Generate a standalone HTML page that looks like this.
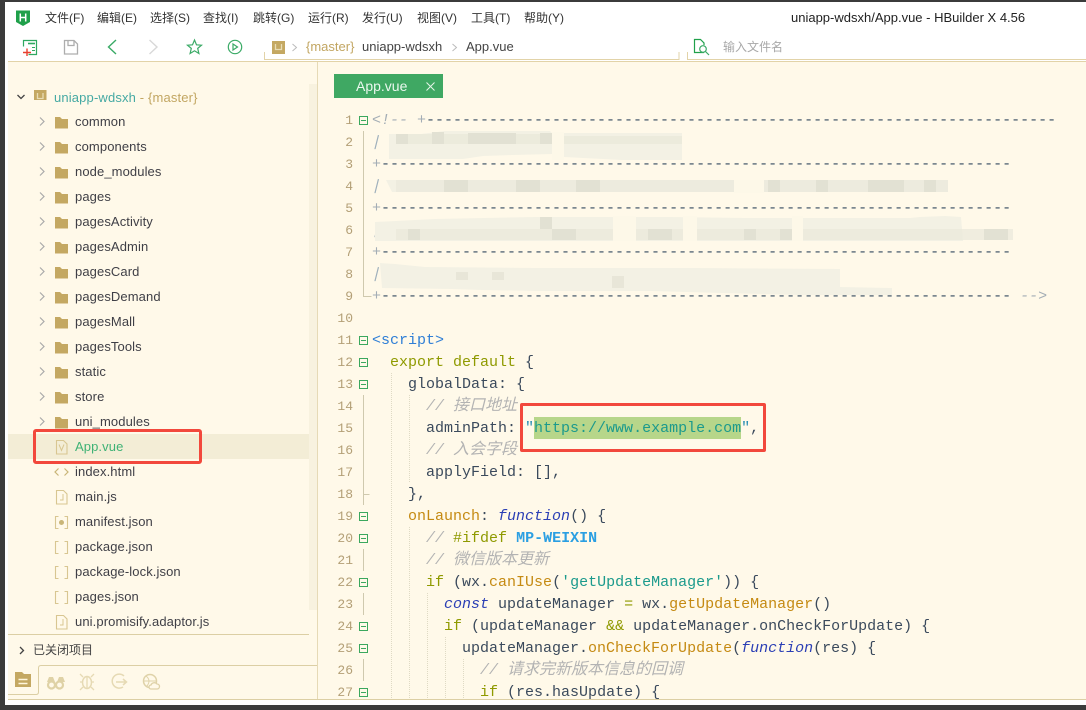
<!DOCTYPE html>
<html><head><meta charset="utf-8"><style>
html,body{margin:0;padding:0;width:1086px;height:710px;overflow:hidden;background:#3b3b3b}
*{box-sizing:border-box}
.a{position:absolute}
#app{position:absolute;left:5px;top:2px;width:1081px;height:703px;background:#fff;overflow:hidden}
#root{position:absolute;left:0;top:0;width:1086px;height:710px;font-family:"Liberation Sans","Noto Sans CJK SC",sans-serif;overflow:hidden}
.m{position:absolute;top:10px;font-size:12px;line-height:16px;color:#333;white-space:nowrap}
.r{position:absolute;left:75px;font-size:13px;line-height:18px;color:#3f3f46;white-space:nowrap;letter-spacing:.1px}
pre{margin:0;font-family:"Liberation Mono","Noto Sans CJK SC",monospace;font-size:15px;line-height:22px;position:absolute}
pre .z{font-size:16px;line-height:0;letter-spacing:0}
.c{color:#b3b3b3;font-style:italic}.k{color:#8f9a00}.p{color:#c58a12}.f{color:#2b3fb5;font-style:italic}
.s{color:#1b9a8c}.t{color:#2f7fd6}.d{color:#3a4f64}.q{color:#a3adb5;font-style:italic}
.b{display:inline-block;transform:skewX(-14deg);color:#9fb0bc;line-height:0}
</style></head><body>
<div id="app"></div>
<div id="root">
<div class="a" style="left:8px;top:62px;width:1078px;height:637px;background:#fff9e9"></div>
<div class="a" style="left:8px;top:61px;width:1078px;height:1px;background:#e2d3a8"></div>
<div class="a" style="left:8px;top:699px;width:1078px;height:1px;background:#dccfa4"></div>
<div class="a" style="left:317px;top:62px;width:1px;height:637px;background:#e6dab6"></div>

<svg class="a" style="left:0;top:0" width="1086" height="100" fill="none">
<path d="M16 10.500h14v11.500l-7 4-7-4z" fill="#1fa04a"/>
<path d="M20.300 13.500v8M25.700 13.500v8M20.300 17.500h5.400" stroke="#fff" stroke-width="1.500"/>
<path d="M23.500 46.500v-6h13v14h-8" stroke="#2fa860" stroke-width="1.200"/>
<path d="M28 43.500h7" stroke="#2fa860" stroke-width="1.600"/><path d="M32 47.500h3M32 50.500h3" stroke="#2fa860"/>
<path d="M23 52.500h8M27 48.500v7.500" stroke="#e8402f" stroke-width="1.400"/>
<path d="M64.500 40.500h9.500l3.500 3.500v10h-13zM68 40.500v5h6v-5" stroke="#adadad" stroke-width="1.300"/>
<path d="M116 40l-7.500 7 7.500 7" stroke="#3aaa66" stroke-width="1.400"/>
<path d="M149.500 40l7.500 7-7.500 7" stroke="#d8d8d8" stroke-width="1.400"/>
<path d="M194.500 40l2 4.800 5 .4-3.800 3.200 1.200 5.100-4.400-2.700-4.400 2.700 1.200-5.100-3.800-3.200 5-.4z" stroke="#3aaa66" stroke-width="1.200"/>
<circle cx="235" cy="47" r="6.700" stroke="#3aaa66" stroke-width="1.200"/><path d="M233 44l4.500 3-4.500 3z" stroke="#3aaa66" stroke-width="1.200"/>
<path d="M264.500 52v7.500h414.500v-7.500M687.500 52v7.500H1086" stroke="#e2d3a8"/>
<rect x="272" y="41" width="13" height="13" fill="#c4a862"/><path d="M275.500 44v5.500h6V44" stroke="#e8dcb4" stroke-width="1.300"/>
<path d="M292.500 44l4 3.500-4 3.500M452.500 44l4 3.500-4 3.500" stroke="#bbb"/>
<path d="M704 52.500h-9.500V39.500h6l3.500 3.500v2" stroke="#1fa04a" stroke-width="1.200"/>
<circle cx="703" cy="49" r="3.300" stroke="#3aaa66" stroke-width="1.200"/><path d="M705.500 51.500l3.500 3.500" stroke="#3aaa66" stroke-width="1.200"/>
<path d="M17.500 95l3.500 3.500 3.500-3.500" stroke="#444" stroke-width="1.300"/>
<rect x="34" y="90" width="12.500" height="13" fill="#c4a862"/><path d="M37.500 93v5.500h5.500V93" stroke="#e8dcb4" stroke-width="1.300"/>
</svg>

<div class="m" style="left:45px">文件(F)</div><div class="m" style="left:97px">编辑(E)</div><div class="m" style="left:150px">选择(S)</div><div class="m" style="left:203px">查找(I)</div><div class="m" style="left:253px">跳转(G)</div><div class="m" style="left:308px">运行(R)</div><div class="m" style="left:362px">发行(U)</div><div class="m" style="left:417px">视图(V)</div><div class="m" style="left:471px">工具(T)</div><div class="m" style="left:524px">帮助(Y)</div>
<div class="a" style="left:791px;top:10px;font-size:13px;line-height:16px;color:#222;white-space:nowrap">uniapp-wdsxh/App.vue - HBuilder X 4.56</div>
<div class="a" style="left:306px;top:39px;font-size:13px;line-height:16px;color:#c2a662;white-space:nowrap">{master}</div>
<div class="a" style="left:362px;top:39px;font-size:13px;line-height:16px;color:#444;white-space:nowrap">uniapp-wdsxh</div>
<div class="a" style="left:466px;top:39px;font-size:13px;line-height:16px;color:#444;white-space:nowrap">App.vue</div>
<div class="a" style="left:723px;top:39px;font-size:12px;line-height:16px;color:#a8a8a8;white-space:nowrap">输入文件名</div>

<div class="a" style="left:309px;top:84px;width:8px;height:526px;background:#f8f2df"></div>
<div class="a" style="left:8px;top:434px;width:301px;height:25px;background:#f3edd6"></div>
<div class="a" style="left:54px;top:89px;font-size:13px;line-height:18px;color:#45a9a3;white-space:nowrap;letter-spacing:.15px">uniapp-wdsxh <span style="color:#c2a662">- {master}</span></div>
<div class="r" style="top:113px">common</div><div class="r" style="top:138px">components</div><div class="r" style="top:163px">node_modules</div><div class="r" style="top:188px">pages</div><div class="r" style="top:213px">pagesActivity</div><div class="r" style="top:238px">pagesAdmin</div><div class="r" style="top:263px">pagesCard</div><div class="r" style="top:288px">pagesDemand</div><div class="r" style="top:313px">pagesMall</div><div class="r" style="top:338px">pagesTools</div><div class="r" style="top:363px">static</div><div class="r" style="top:388px">store</div><div class="r" style="top:413px">uni_modules</div>
<div class="r" style="top:438px;color:#3fb275">App.vue</div><div class="r" style="top:463px">index.html</div><div class="r" style="top:488px">main.js</div><div class="r" style="top:513px">manifest.json</div><div class="r" style="top:538px">package.json</div><div class="r" style="top:563px">package-lock.json</div><div class="r" style="top:588px">pages.json</div><div class="r" style="top:613px">uni.promisify.adaptor.js</div>
<div class="a" style="left:33px;top:642px;font-size:12px;line-height:16px;color:#444;white-space:nowrap">已关闭项目</div>

<svg class="a" style="left:0;top:101px" width="320" height="600" fill="none">
<defs>
<g id="fd"><path d="M0 1h5l2 2h6v9.500H0z" fill="#c4a862"/><path d="M-15 1.500l4 4-4 4" stroke="#aaa" stroke-width="1.200"/></g>
<g id="fl"><path d="M.5.500h7l3.500 3.500v10H.5z" stroke="#d8c691" stroke-width="1.100"/></g>
<g id="br"><path d="M3.500.500H.5v12h3M9.500.500h3v12h-3" stroke="#d8c691" stroke-width="1.100"/></g>
</defs>
<use href="#fd" x="55" y="15"/><use href="#fd" x="55" y="40"/><use href="#fd" x="55" y="65"/><use href="#fd" x="55" y="90"/><use href="#fd" x="55" y="115"/><use href="#fd" x="55" y="140"/><use href="#fd" x="55" y="165"/><use href="#fd" x="55" y="190"/><use href="#fd" x="55" y="215"/><use href="#fd" x="55" y="240"/><use href="#fd" x="55" y="265"/><use href="#fd" x="55" y="290"/><use href="#fd" x="55" y="315"/>
<use href="#fl" x="56" y="339"/><path d="M59 343.500l2.500 6 2.500-6" stroke="#d8c691"/>
<path d="M58.500 367.500l-3.500 3.500 3.500 3.500M64.500 367.500l3.500 3.500-3.500 3.500" stroke="#c9b577" stroke-width="1.200"/>
<use href="#fl" x="56" y="389"/><path d="M63 393v6h-3" stroke="#d8c691"/>
<use href="#br" x="55" y="415"/><circle cx="61.500" cy="421.500" r="2.500" fill="#c9b577"/>
<use href="#br" x="55" y="440"/><use href="#br" x="55" y="465"/><use href="#br" x="55" y="490"/>
<use href="#fl" x="56" y="514"/><path d="M63 518v6h-3" stroke="#d8c691"/>
<g transform="translate(0,-1)">
<path d="M8 534.500h301" stroke="#dccfa4"/>
<path d="M20 547l3.500 3.500-3.500 3.500" stroke="#444" stroke-width="1.300"/>
<path d="M317 565.500H41q-2.500 0-2.500 2.500v24q0 2.500-2.500 2.500H8" stroke="#dccfa4"/>
<path d="M15 572h7l2 2h7v13H15z" fill="#c4a862"/><path d="M18.500 579.500h9M18.500 583.500h9" stroke="#fff6dc" stroke-width="1.600"/>
<circle cx="51.500" cy="585" r="3.500" stroke="#dfd2a6" stroke-width="2.200"/><circle cx="59.500" cy="585" r="3.500" stroke="#dfd2a6" stroke-width="2.200"/><path d="M49 577h4l2 5h2l2-5h4l2 5H47z" fill="#dfd2a6"/>
<ellipse cx="87" cy="582.500" rx="4.500" ry="6" stroke="#e6dab4" stroke-width="1.500"/><path d="M87 577v12M80 574l3 3M94 574l-3 3M80 582h3M91 582h3M80 590l3-3M94 590l-3-3" stroke="#e6dab4" stroke-width="1.300"/>
<path d="M124 576a7 7 0 1 0-1 11M116 582h10M123 579l3.500 3-3.500 3" stroke="#e6dab4" stroke-width="1.500"/>
<circle cx="150" cy="581" r="6.500" stroke="#dfd2a8" stroke-width="1.500"/><path d="M146 576c4 3 4 7 0 11M144 581h12" stroke="#dfd2a8"/><path d="M151 589h6a2.500 2.500 0 0 0 0-5 3.500 3.500 0 0 0-6 1 2 2 0 0 0 0 4z" fill="#fff9e9" stroke="#dfd2a8" stroke-width="1.300"/>
</g>
</svg>

<div class="a" style="left:334px;top:74px;width:109px;height:24px;background:#3fa863"></div>
<div class="a" style="left:356px;top:78px;font-size:14px;line-height:17px;color:#eaf7ee;white-space:nowrap">App.vue</div>
<svg class="a" style="left:425px;top:81px" width="11" height="11"><path d="M1.500 1.500l8 8M9.500 1.500l-8 8" stroke="#e6f5ea" stroke-width="1"/></svg>

<div class="a" style="left:534px;top:417px;width:207px;height:22px;background:#b7d68a"></div>

<div class="a" style="left:320px;top:110px;width:766px;height:589px;overflow:hidden">
<pre style="left:0;top:0;width:33px;text-align:right;font-size:13px;color:#b39f76;line-height:22px">1
2
3
4
5
6
7
8
9
10
11
12
13
14
15
16
17
18
19
20
21
22
23
24
25
26
27</pre>
<pre style="left:52px;top:0;color:#3b4a5c"><span class="q">&lt;!-- +</span><span class="d">----------------------------------------------------------------------</span>
<span class="b">|</span>
<span class="q">+</span><span class="d">----------------------------------------------------------------------</span>
<span class="b">|</span>
<span class="q">+</span><span class="d">----------------------------------------------------------------------</span>
<span class="b">|</span>
<span class="q">+</span><span class="d">----------------------------------------------------------------------</span>
<span class="b">|</span>
<span class="q">+</span><span class="d">----------------------------------------------------------------------</span><span class="q"> --&gt;</span>

<span class="t">&lt;script&gt;</span>
  <span class="k">export default</span> {
    globalData: {
      <span class="c">// <span class="z">接口地址</span></span>
      adminPath: <span style="color:#2a8fb5">"</span><span class="s">https://www.example.com</span><span style="color:#2a8fb5">"</span>,
      <span class="c">// <span class="z">入会字段</span></span>
      applyField: [],
    },
    <span class="p">onLaunch</span>: <span class="f">function</span>() {
      <span class="c">//</span> <span class="k">#ifdef</span> <b style="color:#2b9fe2">MP-WEIXIN</b>
      <span class="c">// <span class="z">微信版本更新</span></span>
      <span class="k">if</span> (wx.<span class="p">canIUse</span>(<span class="s">'getUpdateManager'</span>)) {
        <span class="f">const</span> updateManager <span class="k">=</span> wx.<span class="p">getUpdateManager</span>()
        <span class="k">if</span> (updateManager <span class="k">&amp;&amp;</span> updateManager.onCheckForUpdate) {
          updateManager.<span class="p">onCheckForUpdate</span>(<span class="f">function</span>(res) {
            <span class="c">// <span class="z">请求完新版本信息的回调</span></span>
            <span class="k">if</span> (res.hasUpdate) {</pre>
</div>

<svg class="a" style="left:0;top:0" width="1086" height="710" fill="none">
<g fill="#f3f1e4">
<path d="M389 134h32l24-3h105l3 3v20l-40 1-30 1-20 3h-74z"/><path d="M564 133h118v27h-60l-58-3z"/>
<path d="M386 180l12 0v12l-4 0h-2z"/><rect x="396" y="180" width="552" height="12"/>
<path d="M375 222l60-3 100-2h135l75 1h40l125 0 10-1 25-1 16 1 2 24H375z"/>
<path d="M380 263l15 1 30 3 110 1h160l145 1v4-1 15l52 1 0 7-90 0-80-2-70-2-110 0-60-1-30-1-70-1z"/>
</g>
<g fill="#e9e8da">
<rect x="396" y="134" width="156" height="10" opacity=".75"/><rect x="564" y="136" width="118" height="8" opacity=".75"/>
<rect x="396" y="180" width="552" height="12" opacity=".6"/>
<rect x="396" y="229" width="617" height="11" opacity=".7"/>
</g>
<g fill="#e2e1d3">
<rect x="396" y="134" width="12" height="10"/><rect x="432" y="132" width="12" height="12"/><rect x="468" y="133" width="48" height="11"/><rect x="540" y="133" width="12" height="11"/>
<rect x="444" y="180" width="24" height="12"/><rect x="516" y="180" width="24" height="12"/><rect x="528" y="180" width="0" height="12"/><rect x="576" y="180" width="24" height="12"/><rect x="768" y="180" width="12" height="12"/><rect x="816" y="180" width="12" height="12"/><rect x="868" y="180" width="36" height="12"/><rect x="924" y="180" width="12" height="12"/>
<rect x="408" y="229" width="12" height="11"/><rect x="540" y="217" width="12" height="12"/><rect x="552" y="229" width="24" height="11"/><rect x="648" y="229" width="24" height="11"/><rect x="780" y="229" width="12" height="11"/><rect x="744" y="229" width="12" height="11"/><rect x="984" y="229" width="24" height="11"/>
<rect x="456" y="272" width="12" height="8" opacity=".7"/><rect x="492" y="272" width="12" height="8" opacity=".7"/><rect x="612" y="276" width="12" height="12" opacity=".7"/>
</g>
<g fill="#fdf8e8"><rect x="552" y="132" width="12" height="28"/><rect x="613" y="216" width="23" height="25"/><rect x="683" y="216" width="14" height="25"/><rect x="792" y="216" width="11" height="25"/><rect x="734" y="180" width="30" height="13"/></g>

<path d="M363.500 131v165.500h8M363.500 395v110M363.500 494.500h6M363.500 549v22M363.500 593v22M363.500 659v22" stroke="#cfc9ae" stroke-width="1"/>
<g stroke="#dfdac4" stroke-dasharray="1 1">
<path d="M391.500 373v326M409.500 395v88M409.500 527v172M427.500 593v106M445.500 637v62M463.500 659v40"/>
</g>
<g stroke="#3ba85e" fill="#fff9e9"><rect x="359.500" y="116.500" width="8" height="8"/><rect x="359.500" y="336.500" width="8" height="8"/><rect x="359.500" y="358.500" width="8" height="8"/><rect x="359.500" y="380.500" width="8" height="8"/><rect x="359.500" y="512.500" width="8" height="8"/><rect x="359.500" y="534.500" width="8" height="8"/><rect x="359.500" y="578.500" width="8" height="8"/><rect x="359.500" y="622.500" width="8" height="8"/><rect x="359.500" y="644.500" width="8" height="8"/><rect x="359.500" y="688.500" width="8" height="8"/>
<path d="M361 120.500h5M361 340.500h5M361 362.500h5M361 384.500h5M361 516.500h5M361 538.500h5M361 582.500h5M361 626.500h5M361 648.500h5M361 692.500h5"/></g>
</svg>

<div class="a" style="left:520px;top:403px;width:246px;height:49px;border:3px solid #f2483c;border-radius:2px"></div>
<div class="a" style="left:33px;top:429px;width:169px;height:35px;border:3px solid #f2483c;border-radius:3px"></div>
</div>
</body></html>
